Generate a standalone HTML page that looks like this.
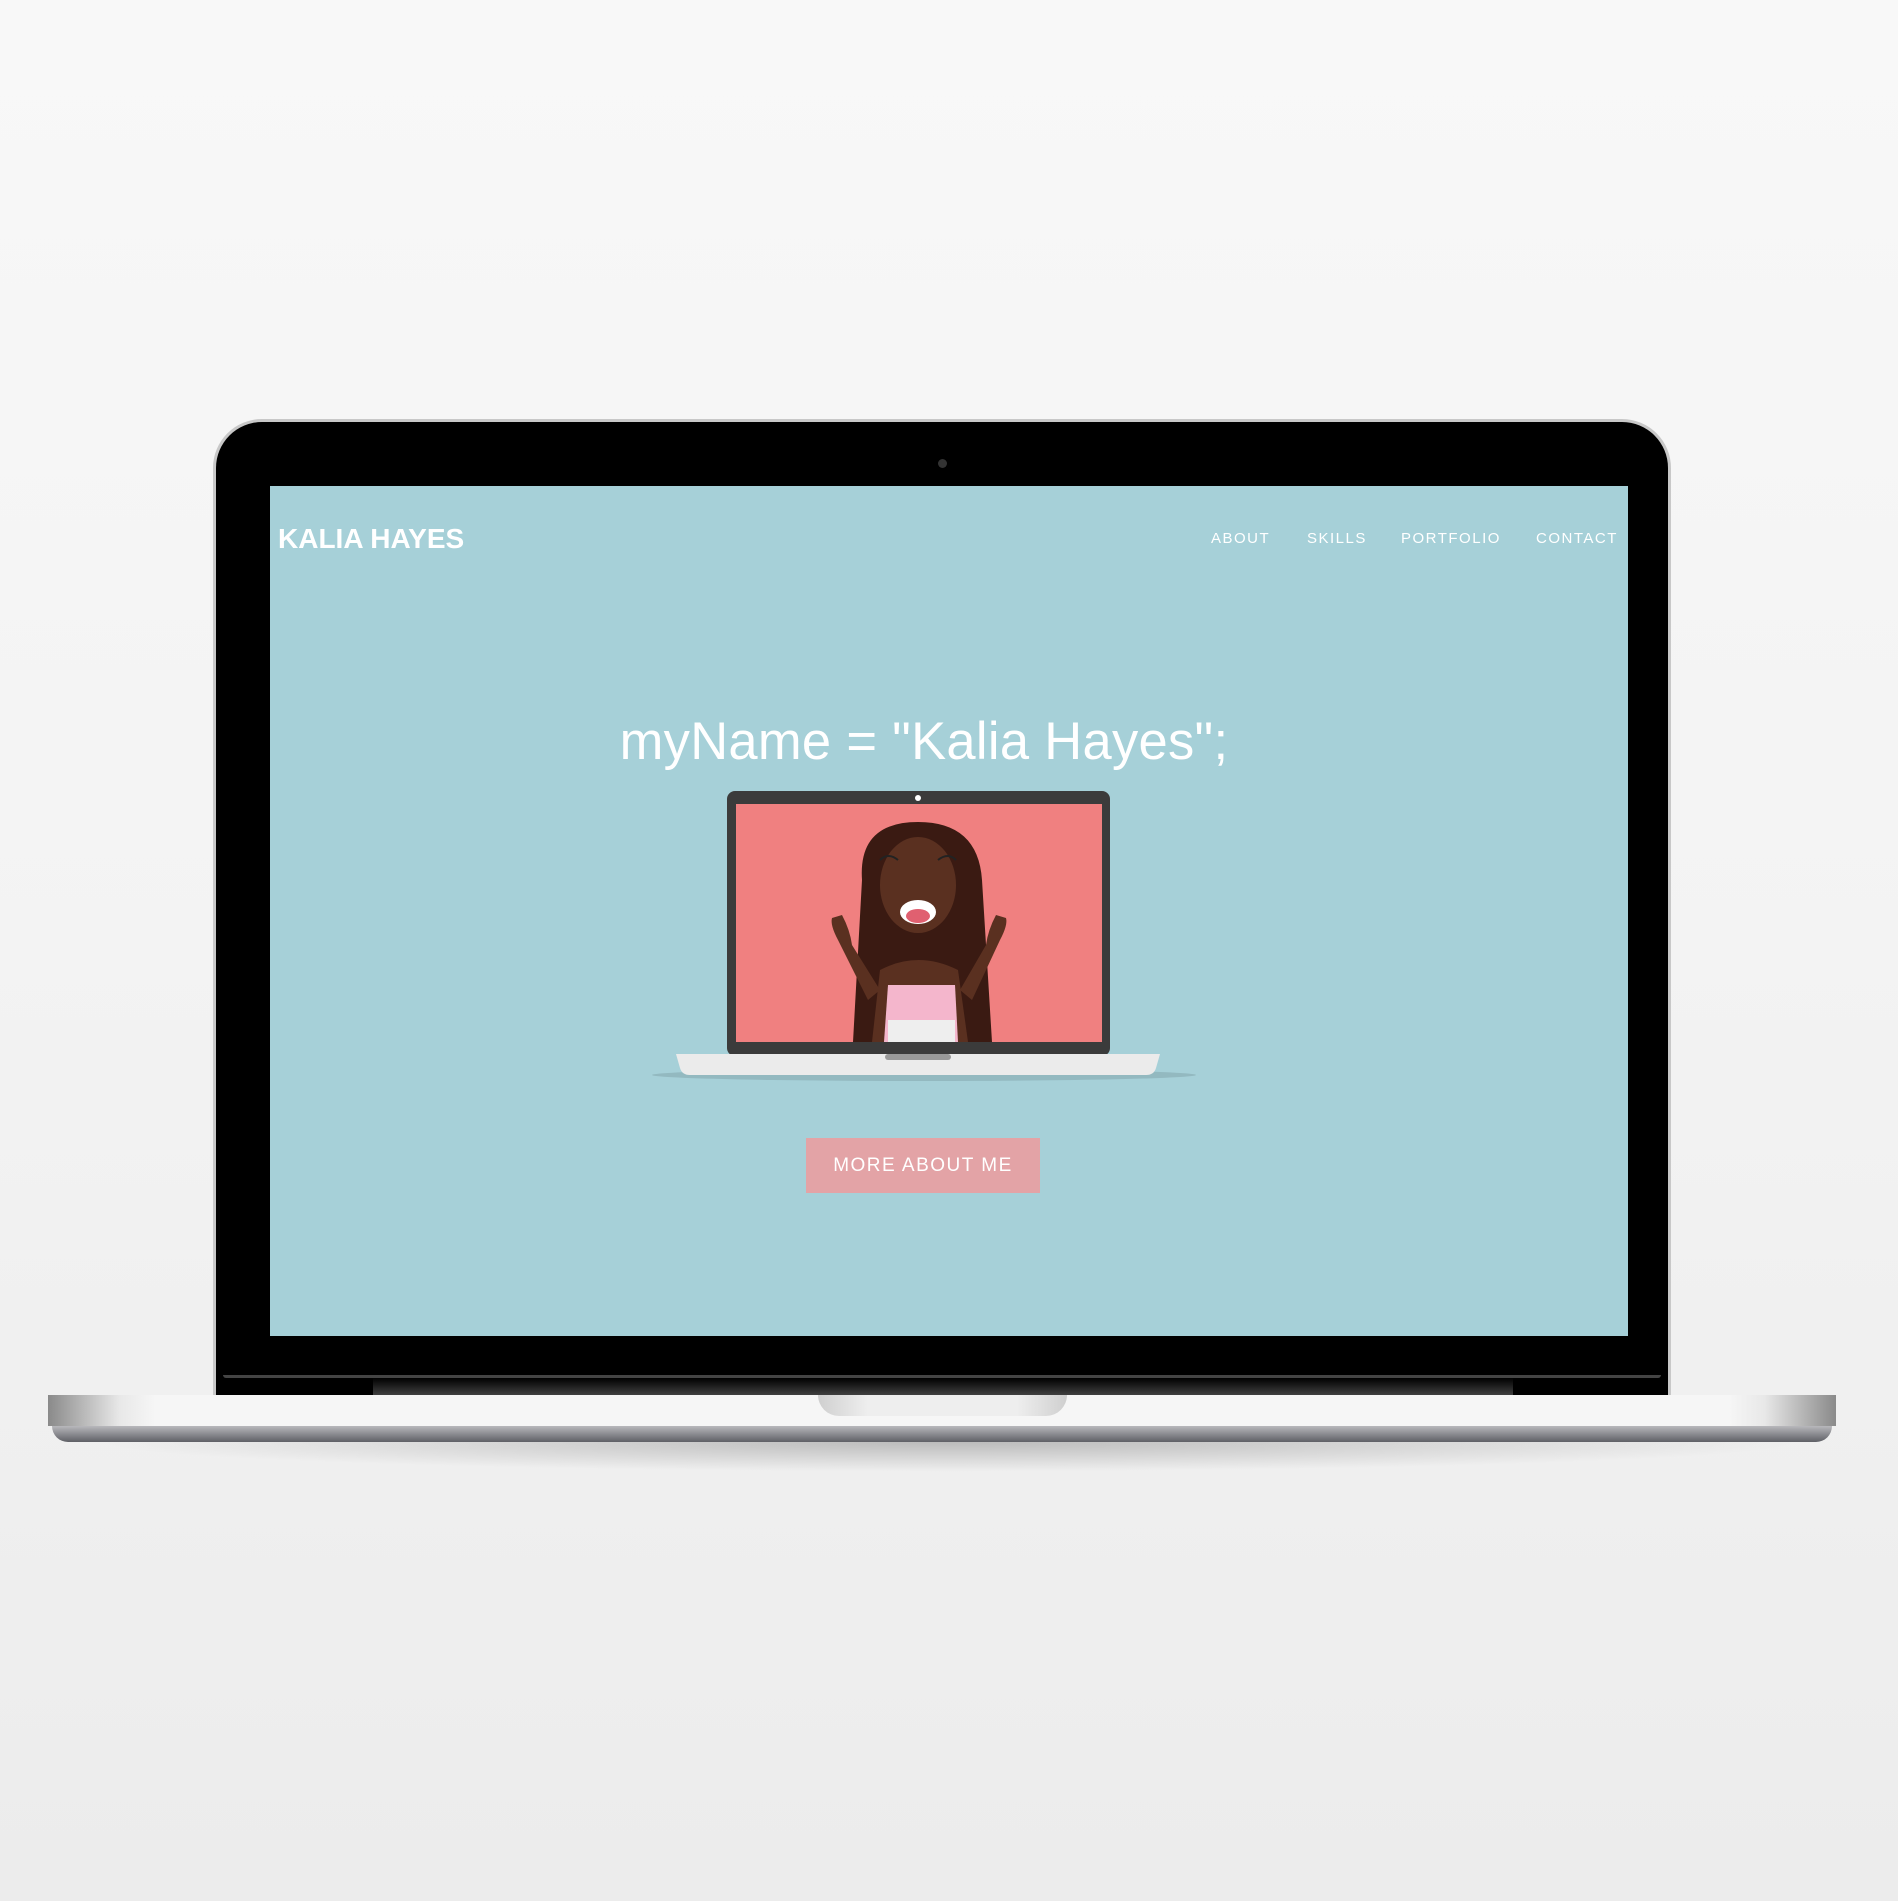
<!DOCTYPE html>
<html><head><meta charset="utf-8">
<style>
html,body{margin:0;padding:0}
body{width:1898px;height:1901px;position:relative;overflow:hidden;background:linear-gradient(180deg,#f8f8f8 0%,#f3f3f3 50%,#ececec 100%);font-family:"Liberation Sans",sans-serif}
.abs{position:absolute}
.lid{left:216px;top:422px;width:1452px;height:990px;background:#000;border-radius:46px 46px 0 0;box-shadow:0 0 0 3px #c8c8c8}
.cam{left:938px;top:459px;width:9px;height:9px;border-radius:50%;background:#333}
.screen{left:270px;top:486px;width:1358px;height:850px;background:#a6d0d8}
.rim{left:223px;top:1375px;width:1438px;height:3px;background:#444;border-radius:0 0 10px 10px}
.hinge{left:373px;top:1378px;width:1140px;height:18px;background:linear-gradient(#000,#444)}
.base{left:48px;top:1395px;width:1788px;height:31px;background:linear-gradient(90deg,#8a8a8a 0%,#e8e8e8 4%,#f6f6f6 6%,#f6f6f6 94%,#e8e8e8 96%,#8a8a8a 100%)}
.base2{left:52px;top:1426px;width:1780px;height:16px;background:linear-gradient(#b8b8bc,#5f6066);border-radius:0 0 40px 40px}
.notch{left:818px;top:1395px;width:249px;height:21px;background:linear-gradient(90deg,#cfcfcf,#eee 20%,#eee 80%,#cfcfcf);border-radius:0 0 22px 22px}
.shadow{left:90px;top:1442px;width:1718px;height:30px;background:radial-gradient(ellipse at center top,rgba(0,0,0,.22),rgba(0,0,0,0) 70%)}
.logo{left:278px;top:523px;color:#fff;font-weight:bold;font-size:28px}
.nav{top:530px;color:#fff;font-size:15px;letter-spacing:1.5px}
.h1{left:0;width:1848px;text-align:center;top:711px;color:#fff;font-size:52.5px;letter-spacing:0.3px}
.btn{left:806px;top:1138px;width:234px;height:55px;background:#e3a3a6;color:#fff;font-size:19px;letter-spacing:1.5px;text-align:center;line-height:55px}
</style></head><body>
<div class="abs lid"></div>
<div class="abs cam"></div>
<div class="abs screen"></div>
<div class="abs rim"></div>
<div class="abs hinge"></div>
<div class="abs shadow"></div>
<div class="abs base"></div>
<div class="abs base2"></div>
<div class="abs notch"></div>
<div class="abs logo">KALIA HAYES</div>
<div class="abs nav" style="left:1211px">ABOUT</div>
<div class="abs nav" style="left:1307px">SKILLS</div>
<div class="abs nav" style="left:1401px">PORTFOLIO</div>
<div class="abs nav" style="left:1536px">CONTACT</div>
<div class="abs h1">myName = "Kalia Hayes";</div>
<svg class="abs" style="left:640px;top:785px" width="570" height="300" viewBox="640 785 570 300">
<ellipse cx="924" cy="1075" rx="272" ry="6" fill="#93b9c0"/>
<rect x="727" y="791" width="383" height="265" rx="8" fill="#3b3b3b"/>
<circle cx="918" cy="798" r="3" fill="#fff"/>
<rect x="736" y="804" width="366" height="238" fill="#f08080"/>
<path d="M676 1054H1160L1156 1068Q1154 1075 1146 1075H690Q682 1075 680 1068Z" fill="#ebebeb"/>
<rect x="885" y="1054" width="66" height="6" rx="3" fill="#999"/>
<path d="M862 880Q858 822 918 822Q978 822 982 880L992 1042H853Z" fill="#3a1a12"/>
<ellipse cx="918" cy="885" rx="38" ry="48" fill="#5a3020"/>
<path d="M880 970Q918 950 958 970L968 1042H872Z" fill="#5a3020"/>
<path d="M888 985H955L958 1042H884Z" fill="#f4b6cc"/>
<path d="M888 1020H955V1042H888Z" fill="#eee"/>
<ellipse cx="918" cy="912" rx="18" ry="12" fill="#fff"/>
<ellipse cx="918" cy="916" rx="12" ry="7" fill="#e06070"/>
<path d="M838 940Q830 925 832 918L842 915Q850 930 852 945L880 990 868 1000Z" fill="#5a3020"/>
<path d="M1000 940Q1008 925 1006 918L996 915Q988 930 986 945L960 990 972 1000Z" fill="#5a3020"/>
<path d="M880 860Q888 852 898 860M938 860Q948 852 956 860" stroke="#222" stroke-width="2" fill="none"/>
</svg>
<div class="abs btn">MORE ABOUT ME</div>
</body></html>
